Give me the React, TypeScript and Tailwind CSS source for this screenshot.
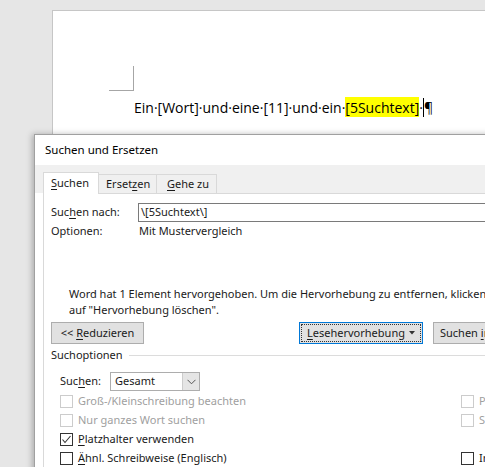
import React from "react";

const ui = { fontFamily: '"Noto Sans", "Open Sans", sans-serif' };
const doc = { fontFamily: '"Open Sans", "Noto Sans", sans-serif' };

const Key: React.FC<{ children: React.ReactNode }> = ({ children }) => (
  <span className="underline underline-offset-2">{children}</span>
);

interface BoxProps {
  checked?: boolean;
  disabled?: boolean;
  label: React.ReactNode;
}

const CheckRow: React.FC<BoxProps> = ({ checked, disabled, label }) => (
  <div className="flex items-center h-[19px]">
    <div
      className={`shrink-0 w-[13px] h-[13px] border bg-white flex items-center justify-center ${
        disabled ? "border-[#cccccc]" : "border-[#333333]"
      }`}
    >
      {checked && (
        <svg width="11" height="11" viewBox="0 0 11 11">
          <polyline points="1.5,5.5 4,8.5 9.5,2" fill="none" stroke="#333" strokeWidth="1.1" />
        </svg>
      )}
    </div>
    <span className={`ml-[5px] whitespace-nowrap ${disabled ? "text-[#a0a0a0]" : "text-[#1a1a1a]"}`}>
      {label}
    </span>
  </div>
);

export default function App() {
  return (
    <div className="relative w-[485px] h-[467px] overflow-hidden bg-[#e6e6e6]">
      {/* Word page */}
      <div className="ml-[52px] mt-[10px] h-[520px] bg-white border-l border-t border-[#c6c6c6]">
        <div className="ml-[56px] pt-[55px] w-[25px]">
          <div className="w-[25px] h-[25px] border-r border-b border-[#a6a6a6]" />
        </div>
        <div className="ml-[81px] mt-[6px] flex items-center h-[20px] text-[14px] text-black whitespace-nowrap" style={doc}>
          <span>Ein·[Wort]·und·eine·[11]·und·ein·</span>
          <span className="bg-[#ffff00] h-[20px] flex items-center">[5Suchtext]</span>
          <span>·</span>
          <span className="w-px h-[19px] bg-black" />
          <span>¶</span>
        </div>
      </div>

      {/* Find and replace dialog */}
      <div
        className="absolute left-[34px] top-[134px] w-[470px] h-[360px] bg-white border border-[#a0a0a0] shadow-[-2px_0_6px_rgba(0,0,0,0.25)] text-[11px] text-[#1a1a1a]"
        style={ui}
      >
        <div className="h-[30px] flex items-center pl-[10px] text-[11.5px] text-black">Suchen und Ersetzen</div>

        <div className="bg-[#f0f0f0] pl-[8px] h-[28px] flex items-end">
          <div className="relative z-10 h-[22px] mb-[-1px] w-[56px] bg-white border border-b-0 border-[#d9d9d9] flex items-center pl-[7px]">
            <Key>S</Key>uchen
          </div>
          <div className="h-[19px] w-[58px] border border-l-0 border-b-0 border-[#d9d9d9] flex items-center pl-[7px]">
            Erset<Key>z</Key>en
          </div>
          <div className="h-[19px] w-[60px] border border-l-0 border-b-0 border-[#d9d9d9] flex items-center pl-[10px]">
            <Key>G</Key>ehe zu
          </div>
        </div>

        <div className="ml-[8px] bg-white border-l border-t border-[#d9d9d9] pl-[7px] h-[320px]">
          <div className="mt-[9px] flex items-center h-[19px]">
            <span className="w-[87px]">
              Suc<Key>h</Key>en nach:
            </span>
            <div className="flex-1 h-[19px] border border-[#7a7a7a] flex items-center pl-[2px]">\[5Suchtext\]</div>
          </div>
          <div className="flex items-center h-[19px]">
            <span className="w-[88px]">Optionen:</span>
            <span>Mit Mustervergleich</span>
          </div>

          <div className="mt-[45px] ml-[18px] leading-[16px] whitespace-nowrap">
            <div>Word hat 1 Element hervorgehoben. Um die Hervorhebung zu entfernen, klicken</div>
            <div>auf "Hervorhebung löschen".</div>
          </div>

          <div className="mt-[4px] flex items-center h-[22px]">
            <div className="w-[93px] h-[22px] bg-[#e1e1e1] border border-[#adadad] flex items-center justify-center">
              <span>&lt;&lt;&nbsp;</span>
              <Key>R</Key>
              <span>eduzieren</span>
            </div>
            <div className="ml-[155px] w-[124px] h-[22px] bg-[#e1e1e1] border border-[#0078d7] p-[1px]">
              <div className="w-full h-full border border-dotted border-[#333] flex items-center justify-center">
                <Key>L</Key>
                <span>esehervorhebung</span>
                <svg className="ml-[4px]" width="6" height="4" viewBox="0 0 6 4">
                  <polygon points="0,0 6,0 3,3.5" fill="#333" />
                </svg>
              </div>
            </div>
            <div className="ml-[10px] w-[70px] h-[22px] bg-[#e1e1e1] border border-[#adadad] flex items-center pl-[6px] whitespace-pre">
              <span>Suchen </span>
              <Key>i</Key>
              <span>n</span>
            </div>
          </div>

          <div className="mt-[3px] flex items-center h-[16px]">
            <span>Suchoptionen</span>
            <div className="ml-[6px] flex-1 h-px bg-[#dcdcdc]" />
          </div>

          <div className="ml-[9px]">
            <div className="mt-[9px] flex items-center h-[19px]">
              <span className="w-[50px]">
                Suc<Key>h</Key>en:
              </span>
              <div className="w-[90px] h-[19px] border border-[#adadad] bg-white flex items-center">
                <span className="flex-1 pl-[4px]">Gesamt</span>
                <div className="w-[17px] h-full bg-[#e5e5e5] border-l border-[#cccccc] flex items-center justify-center">
                  <svg width="9" height="6" viewBox="0 0 9 6">
                    <polyline points="0.5,0.8 4.5,4.8 8.5,0.8" fill="none" stroke="#555" strokeWidth="1" />
                  </svg>
                </div>
              </div>
            </div>

            <div className="mt-[1px] grid grid-cols-[401px_60px]">
              <div>
                <CheckRow disabled label="Groß-/Kleinschreibung beachten" />
                <CheckRow disabled label="Nur ganzes Wort suchen" />
                <CheckRow checked label={<><Key>P</Key>latzhalter verwenden</>} />
                <CheckRow label={<><Key>Ä</Key>hnl. Schreibweise (Englisch)</>} />
              </div>
              <div>
                <CheckRow disabled label="Präfix beachten" />
                <CheckRow disabled label="Suffix beachten" />
                <div className="h-[19px]" />
                <CheckRow label="Interpunktion ignorieren" />
              </div>
            </div>
          </div>
        </div>
      </div>
    </div>
  );
}
